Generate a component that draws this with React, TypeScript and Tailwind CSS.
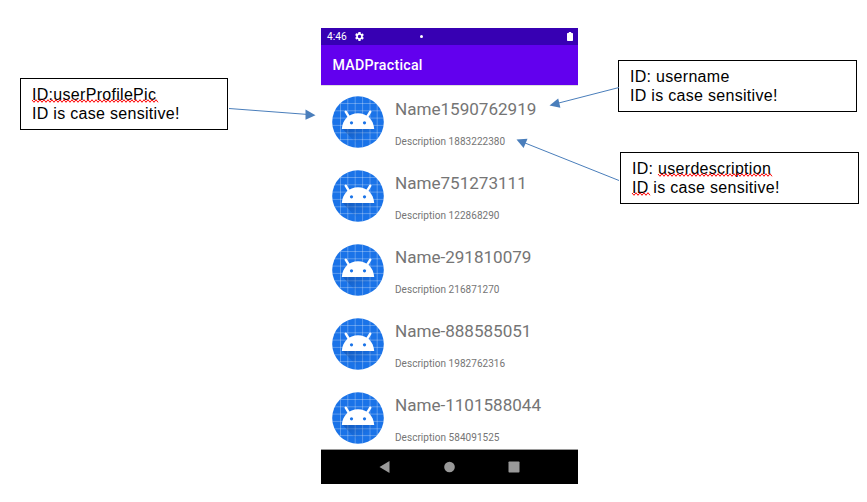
import React from "react";

type Person = { name: string; description: string };

const people: Person[] = [
  { name: "Name1590762919", description: "Description 1883222380" },
  { name: "Name751273111", description: "Description 122868290" },
  { name: "Name-291810079", description: "Description 216871270" },
  { name: "Name-888585051", description: "Description 1982762316" },
  { name: "Name-1101588044", description: "Description 584091525" },
];

const verticals = [-17.5, -10.2, -2.8, 4.6, 12, 19.2];
const horizontals = [-18.5, -11.2, -3.9, 3.4, 10.8, 17.6];

function Avatar() {
  return (
    <svg className="size-[52px] shrink-0" viewBox="-26 -26 52 52">
      <defs>
        <clipPath id="disc">
          <circle r="25.8" />
        </clipPath>
        <linearGradient id="shade" gradientUnits="userSpaceOnUse" x1="-6" y1="6" x2="3" y2="20">
          <stop offset="0" stopColor="#0b3f91" stopOpacity="0.4" />
          <stop offset="1" stopColor="#0b3f91" stopOpacity="0" />
        </linearGradient>
      </defs>
      <circle r="25.8" fill="#1a73e8" />
      <g clipPath="url(#disc)">
        <g stroke="#fff" strokeOpacity="0.36" strokeWidth="0.8">
          {verticals.map((x) => (
            <path key={x} d={`M${x} -26V26`} />
          ))}
          {horizontals.map((y) => (
            <path key={y} d={`M-26 ${y}H26`} />
          ))}
        </g>
        <path d="M-15.5 6.8H15.5L32 24V40H16Z" fill="url(#shade)" />
      </g>
      <path d="M-16.2 7C-15.6 -2.4 -9 -8.8 0 -8.8S15.6 -2.4 16.2 7Z" fill="#fff" />
      <path d="M-12.3 -10.3L-8.8 -4.6M12.3 -10.3L8.8 -4.6" stroke="#fff" strokeWidth="2.4" strokeLinecap="round" />
      <circle cx="-6.5" cy="0.8" r="1.6" fill="#1a73e8" />
      <circle cx="6.5" cy="0.8" r="1.6" fill="#1a73e8" />
    </svg>
  );
}

function PersonRow({ name, description }: Person) {
  return (
    <li className="flex h-[74px] shrink-0 gap-[11px] pt-[10px] pl-[11px]">
      <Avatar />
      <div className="flex flex-col whitespace-nowrap text-[#757575]">
        <span className="mt-[2px] text-[17.1px] leading-[22px] tracking-[-0.02px]">{name}</span>
        <span className="mt-[16px] text-[10px] leading-[12px] tracking-[0.04px]">{description}</span>
      </div>
    </li>
  );
}

function Squiggle({ width }: { width: number }) {
  let d = "M0 1";
  for (let x = 2; x <= width; x += 2) d += `L${x} ${x % 4 === 0 ? 0.7 : 3.3}`;
  return (
    <svg className="absolute top-[14px] left-0 h-[4px] overflow-visible" width={width} height="4">
      <path d={d} fill="none" stroke="#f00" strokeWidth="1" />
    </svg>
  );
}

function Marked({ children, width }: { children: React.ReactNode; width: number }) {
  return (
    <span className="relative inline-block">
      {children}
      <Squiggle width={width} />
    </span>
  );
}

function Callout({ className, children }: { className: string; children: React.ReactNode }) {
  return (
    <div
      className={`h-[52px] border border-black bg-white pt-[6px] pl-[11px] font-['Liberation_Sans',Arial,sans-serif] text-[16px] leading-[19px] tracking-[0.3px] whitespace-nowrap text-black ${className}`}
    >
      {children}
    </div>
  );
}

function Arrows() {
  return (
    <svg className="pointer-events-none absolute inset-0" width="867" height="502">
      <g stroke="#4a7ebb" strokeWidth="1">
        <path d="M229 108.5L307 114.4M619 87.5L558 103.2M619 180.5L525 143" />
      </g>
      <g fill="#4a7ebb">
        <path d="M315.5 115.2L305.5 109.6V119.8Z" />
        <path d="M549.5 105.5L558.2 98.6L560.4 107.8Z" />
        <path d="M516.5 139.5L527.5 138.8L523.6 148Z" />
      </g>
    </svg>
  );
}

function Phone() {
  return (
    <main className="mt-[28px] flex h-[456px] w-[257px] shrink-0 flex-col overflow-hidden bg-white font-[Roboto,sans-serif]">
      <div className="flex h-[17px] shrink-0 items-center bg-[#3700b3] pr-[5px] pl-[6px] text-white">
        <span className="w-[26.5px] text-[10.2px] leading-[17px]">4:46</span>
        <svg className="size-[11px]" viewBox="0 0 24 24" fill="currentColor">
          <path d="M19.14 12.94c.04-.3.06-.61.06-.94s-.02-.64-.07-.94l2.03-1.58a.49.49 0 0 0 .12-.61l-1.92-3.32a.49.49 0 0 0-.59-.22l-2.39.96a7 7 0 0 0-1.62-.94l-.36-2.54A.48.48 0 0 0 13.92 2h-3.84a.48.48 0 0 0-.48.41l-.36 2.54c-.59.24-1.13.57-1.62.94l-2.39-.96a.48.48 0 0 0-.59.22L2.72 8.87a.48.48 0 0 0 .12.61l2.03 1.58a6 6 0 0 0 0 1.88l-2.03 1.58a.49.49 0 0 0-.12.61l1.92 3.32c.12.22.37.29.59.22l2.39-.96c.5.38 1.03.7 1.62.94l.36 2.54c.05.24.24.41.48.41h3.84c.24 0 .44-.17.47-.41l.36-2.54c.59-.24 1.13-.56 1.62-.94l2.39.96c.22.08.47 0 .59-.22l1.92-3.32a.48.48 0 0 0-.12-.61ZM12 15.6A3.6 3.6 0 1 1 12 8.4a3.6 3.6 0 0 1 0 7.2Z" />
        </svg>
        <span className="ml-[55.5px] size-[3px] rounded-full bg-white" />
        <svg className="ml-auto h-[9px] w-[6px]" viewBox="0 0 6 9" fill="currentColor">
          <path d="M1.8 0H4.2V1H5.3Q6 1 6 1.7V8.3Q6 9 5.3 9H.7Q0 9 0 8.3V1.7Q0 1 .7 1H1.8Z" />
        </svg>
      </div>
      <header className="flex h-[40px] shrink-0 items-center bg-[#6200ee] pl-[11.5px]">
        <h1 className="text-[14.2px] leading-[20px] font-medium tracking-[0.26px] text-white">MADPractical</h1>
      </header>
      <ul className="flex h-[364px] shrink-0 flex-col overflow-hidden border-t border-[#dedede]">
        {people.map((p) => (
          <PersonRow key={p.name} {...p} />
        ))}
      </ul>
      <nav className="h-[35px] shrink-0 border-t border-[#9a9a9a] bg-black">
        <svg width="257" height="34" fill="#999">
          <path d="M58.5 17L68.5 11V23Z" />
          <circle cx="128.5" cy="17" r="5.3" />
          <rect x="187.5" y="11.5" width="11" height="11" rx="0.8" />
        </svg>
      </nav>
    </main>
  );
}

export default function App() {
  return (
    <div className="relative flex h-[502px] w-[867px] overflow-hidden bg-white">
      <aside className="w-[321px] shrink-0 pt-[78px] pl-[20px]">
        <Callout className="w-[208px]">
          <div>
            <Marked width={126}>ID:userProfilePic</Marked>
          </div>
          <div>ID is case sensitive!</div>
        </Callout>
      </aside>
      <Phone />
      <aside className="flex flex-col gap-[40px] pt-[60px] pl-[40px]">
        <Callout className="w-[239px]">
          <div>ID: username</div>
          <div>ID is case sensitive!</div>
        </Callout>
        <Callout className="ml-[2px] w-[239px]">
          <div>
            ID: <Marked width={114}>userdescription</Marked>
          </div>
          <div>
            <Marked width={18}>ID</Marked> is case sensitive!
          </div>
        </Callout>
      </aside>
      <Arrows />
    </div>
  );
}
